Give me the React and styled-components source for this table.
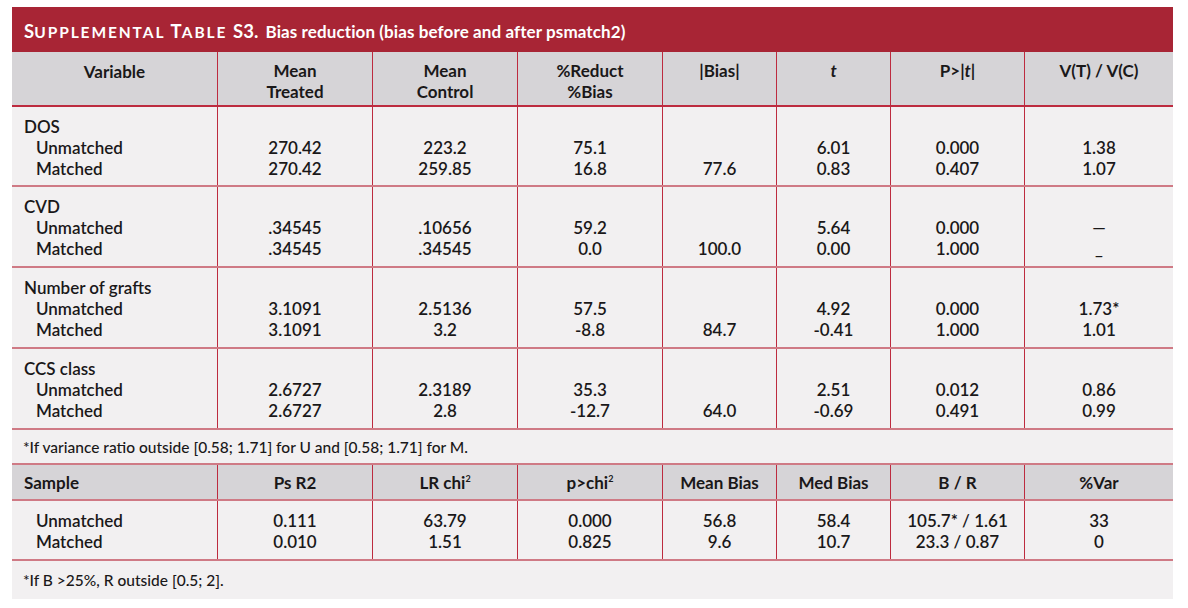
import styled, { createGlobalStyle } from "styled-components";

const GlobalStyle = createGlobalStyle`
  body {
    margin: 0;
    background: #ffffff;
    font-family: Lato, "Open Sans", sans-serif;
  }
`;

const columns = "205px 155px 145px 145px 114px 114px 134px 149px";
const redLine = "#bd2b3f";
const pinkLine = "#cf7a85";

const Wrap = styled.div`
  width: 1161px;
  margin: 7px 0 0 12px;
  background: #f2f0f1;
  color: #1a1819;
`;

const Title = styled.div`
  height: 45px;
  display: flex;
  align-items: baseline;
  padding: 13px 12px 0;
  box-sizing: border-box;
  background: #a82535;
  color: #ffffff;
  font-size: 17px;
  letter-spacing: 0.1px;
  font-weight: 700;
`;

const Caps = styled.span`
  font-size: 18.5px;
`;

const SmallCaps = styled.span`
  font-size: 15.5px;
  letter-spacing: 1.9px;
  text-transform: uppercase;
`;

const Label = styled.span`
  margin-right: 7px;
`;

const Row = styled.div`
  display: grid;
  grid-template-columns: ${columns};
  height: ${(p) => p.$h}px;
  box-sizing: border-box;
  background: ${(p) => (p.$head ? "#d6d4d7" : "transparent")};
  border-bottom: 2px solid ${(p) => (p.$strong ? redLine : pinkLine)};
  font-size: 17px;
  font-weight: ${(p) => (p.$head ? 700 : 600)};
`;

const Cell = styled.div`
  display: flex;
  flex-direction: column;
  justify-content: ${(p) => (p.$middle ? "center" : "flex-start")};
  align-items: ${(p) => (p.$left ? "flex-start" : "center")};
  padding: ${(p) => (p.$middle ? 0 : p.$pt)}px 0 0 ${(p) => (p.$left ? 12 : 0)}px;
  border-left: ${(p) => (p.$first ? "none" : `1px solid ${redLine}`)};
  line-height: 21px;
  white-space: nowrap;
`;

const Line = styled.div`
  height: 21px;
  padding-left: ${(p) => (p.$indent ? 12 : 0)}px;
`;

const Note = styled.div`
  height: ${(p) => p.$h}px;
  box-sizing: border-box;
  display: flex;
  align-items: center;
  padding-left: 11px;
  font-size: 15.5px;
  font-weight: 500;
  border-bottom: ${(p) => (p.$last ? "none" : `2px solid ${pinkLine}`)};
`;

const Sup = styled.sup`
  font-size: 9px;
  vertical-align: 7px;
  line-height: 0;
`;

const Ital = styled.i`
  font-style: italic;
`;

const groups = [
  {
    name: "DOS",
    h: 80,
    u: ["270.42", "223.2", "75.1", "", "6.01", "0.000", "1.38"],
    m: ["270.42", "259.85", "16.8", "77.6", "0.83", "0.407", "1.07"],
  },
  {
    name: "CVD",
    h: 81,
    u: [".34545", ".10656", "59.2", "", "5.64", "0.000", "—"],
    m: [".34545", ".34545", "0.0", "100.0", "0.00", "1.000", "_"],
  },
  {
    name: "Number of grafts",
    h: 81,
    u: ["3.1091", "2.5136", "57.5", "", "4.92", "0.000", "1.73*"],
    m: ["3.1091", "3.2", "-8.8", "84.7", "-0.41", "1.000", "1.01"],
  },
  {
    name: "CCS class",
    h: 81,
    u: ["2.6727", "2.3189", "35.3", "", "2.51", "0.012", "0.86"],
    m: ["2.6727", "2.8", "-12.7", "64.0", "-0.69", "0.491", "0.99"],
  },
];

const sampleRows = {
  u: ["0.111", "63.79", "0.000", "56.8", "58.4", "105.7* / 1.61", "33"],
  m: ["0.010", "1.51", "0.825", "9.6", "10.7", "23.3 / 0.87", "0"],
};

const headers = [
  ["Mean", "Treated"],
  ["Mean", "Control"],
  ["%Reduct", "%Bias"],
  ["|Bias|"],
  [<Ital key="t">t</Ital>],
  [<span key="p">P&gt;|<Ital>t</Ital>|</span>],
  ["V(T) / V(C)"],
];

const sampleHeaders = [
  "Ps R2",
  <span key="lr">LR chi<Sup>2</Sup></span>,
  <span key="pc">p&gt;chi<Sup>2</Sup></span>,
  "Mean Bias",
  "Med Bias",
  "B / R",
  "%Var",
];

const App = () => {
  return (
    <>
      <GlobalStyle />
      <Wrap>
        <Title>
          <Label>
            <Caps>S</Caps>
            <SmallCaps>upplemental </SmallCaps>
            <Caps>T</Caps>
            <SmallCaps>able </SmallCaps>
            <Caps>S3.</Caps>
          </Label>
          Bias reduction (bias before and after psmatch2)
        </Title>

        <Row $h={55} $head $strong>
          <Cell $first $pt={9}>
            <Line>Variable</Line>
          </Cell>
          {headers.map((lines, i) => (
            <Cell key={i} $pt={8}>
              {lines.map((l, j) => (
                <Line key={j}>{l}</Line>
              ))}
            </Cell>
          ))}
        </Row>

        {groups.map((g) => (
          <Row key={g.name} $h={g.h}>
            <Cell $first $left $pt={9}>
              <Line>{g.name}</Line>
              <Line $indent>Unmatched</Line>
              <Line $indent>Matched</Line>
            </Cell>
            {g.u.map((val, i) => (
              <Cell key={i} $pt={9}>
                <Line />
                <Line>{val}</Line>
                <Line>{g.m[i]}</Line>
              </Cell>
            ))}
          </Row>
        ))}

        <Note $h={35}>*If variance ratio outside [0.58; 1.71] for U and [0.58; 1.71] for M.</Note>

        <Row $h={36} $head>
          <Cell $first $left $middle>
            <Line>Sample</Line>
          </Cell>
          {sampleHeaders.map((h, i) => (
            <Cell key={i} $middle>
              <Line>{h}</Line>
            </Cell>
          ))}
        </Row>

        <Row $h={60}>
          <Cell $first $left $pt={9}>
            <Line $indent>Unmatched</Line>
            <Line $indent>Matched</Line>
          </Cell>
          {sampleRows.u.map((val, i) => (
            <Cell key={i} $pt={9}>
              <Line>{val}</Line>
              <Line>{sampleRows.m[i]}</Line>
            </Cell>
          ))}
        </Row>

        <Note $h={38} $last>*If B &gt;25%, R outside [0.5; 2].</Note>
      </Wrap>
    </>
  );
};

export default App;
